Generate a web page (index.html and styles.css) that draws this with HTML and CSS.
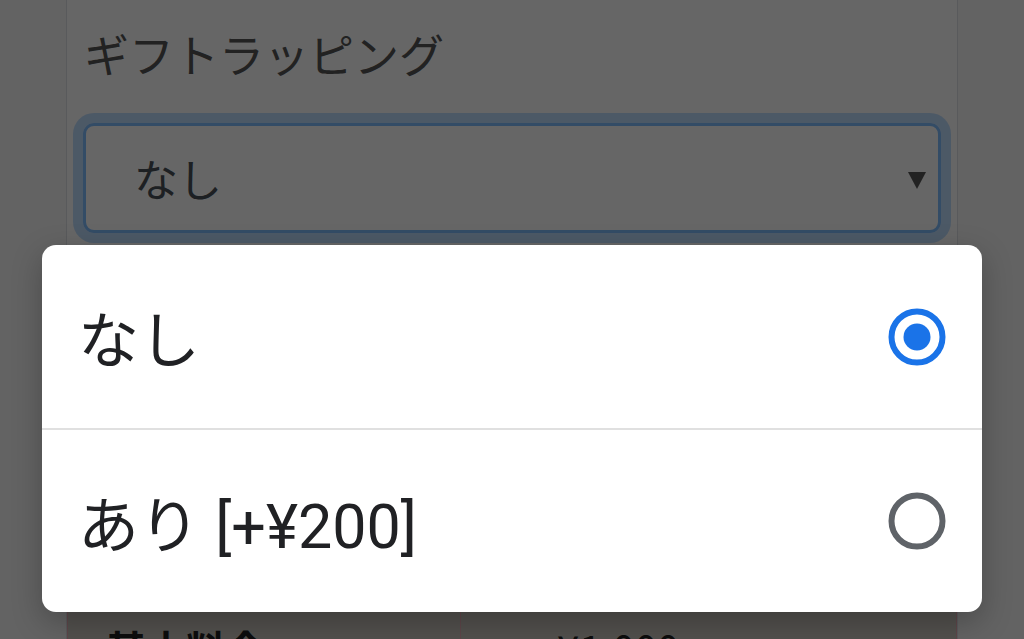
FILE: index.html
```html
<!DOCTYPE html>
<html lang="ja">
<head>
  <meta charset="UTF-8" />
  <meta name="viewport" content="width=device-width, initial-scale=1">
  <title>ギフトラッピング</title>
  <link rel="stylesheet" href="styles.css">
</head>
<body>

  <div class="container">
    <div class="form-group">
      <label class="form-label">ギフトラッピング</label>
      <div class="form-select">
        <span>なし</span>
        <svg class="caret" width="18" height="17" viewBox="0 0 18 17">
          <path d="M0 0 H18 L9 17 Z" fill="currentColor"/>
        </svg>
      </div>
    </div>

    <table class="price-table">
      <tr>
        <th>基本料金 <small>（税込）</small></th>
        <td>¥1,000</td>
      </tr>
    </table>
  </div>

  <div class="overlay"></div>

  <div class="dialog">
    <div class="option">
      <span>なし</span>
      <svg class="radio" width="58" height="58" viewBox="0 0 58 58">
        <circle cx="29" cy="29" r="25.5" fill="none" stroke="#1a73e8" stroke-width="6"/>
        <circle cx="29" cy="29" r="13.5" fill="#1a73e8"/>
      </svg>
    </div>
    <div class="option">
      <span>あり [+¥200]</span>
      <svg class="radio" width="58" height="58" viewBox="0 0 58 58">
        <circle cx="29" cy="29" r="25.5" fill="none" stroke="#5f6368" stroke-width="6"/>
      </svg>
    </div>
  </div>

</body>
</html>
```

FILE: styles.css
```css
* {
  box-sizing: border-box;
  margin: 0;
  padding: 0;
}

html, body {
  width: 1024px;
  height: 639px;
  overflow: hidden;
}

body {
  font-family: "Noto Sans CJK JP", "Noto Sans", sans-serif;
  background: #f8f8f8;
  position: relative;
}

.container {
  width: 892px;
  margin-left: 66px;
  min-height: 639px;
  background: #fff;
  border-left: 1px solid #dee2e6;
  border-right: 1px solid #dee2e6;
  padding: 20px 16px 0;
}

.form-group {
  margin-bottom: 40px;
}

.form-label {
  display: block;
  font-size: 45px;
  line-height: 68px;
  color: #555;
  padding-left: 1px;
  margin-bottom: 35px;
}

.form-select {
  height: 110px;
  border: 3px solid #80bdff;
  border-radius: 11px;
  box-shadow: 0 0 0 10px rgba(0, 123, 255, 0.25);
  display: flex;
  align-items: center;
  justify-content: space-between;
  padding: 0 12px 0 48px;
  font-size: 44px;
  color: #495057;
}

.caret {
  margin-top: 4px;
  color: #555;
}

.price-table {
  width: calc(100% + 32px);
  margin-left: -16px;
  margin-top: 365px;
  border-collapse: collapse;
  background: #cdc8c1;
}

.price-table th,
.price-table td {
  border: 1px solid #e8b0b6;
  padding: 20px 38px;
  font-size: 40px;
  text-align: left;
  color: #222;
}

.price-table th {
  width: 393px;
  font-weight: bold;
}

.price-table td {
  padding-left: 96px;
}

.price-table small {
  font-size: 30px;
  font-weight: normal;
  color: #666;
}

.overlay {
  position: fixed;
  inset: 0;
  background: rgba(0, 0, 0, 0.6);
}

.dialog {
  position: absolute;
  left: 42px;
  top: 245px;
  width: 940px;
  height: 367px;
  background: #fff;
  border-radius: 14px;
  box-shadow: 0 10px 30px rgba(0, 0, 0, 0.25);
  overflow: hidden;
  font-family: Roboto, "Noto Sans CJK JP", sans-serif;
  color: #202124;
}

.option {
  height: 183px;
  display: flex;
  align-items: center;
  justify-content: space-between;
  padding: 0 36px 0 36px;
  font-size: 61px;
}

.option + .option {
  height: 184px;
  border-top: 2px solid #e0e0e0;
}
```
